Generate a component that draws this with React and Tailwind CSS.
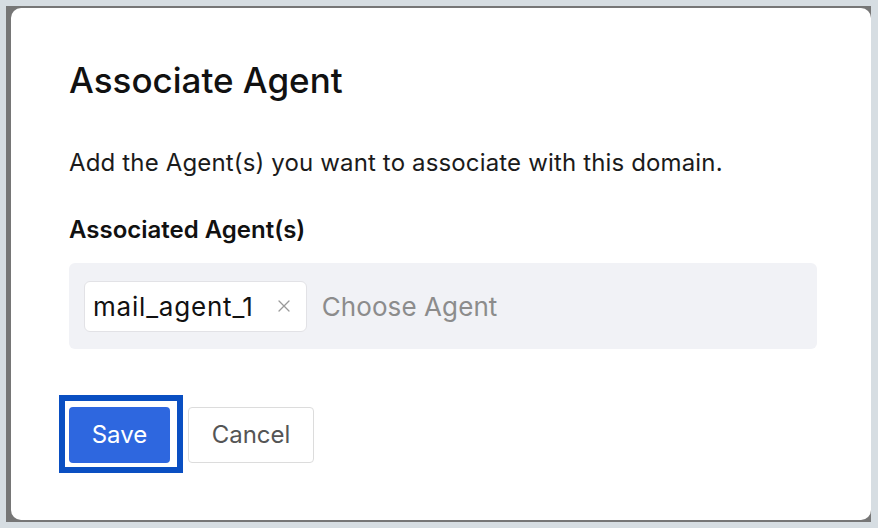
import React from "react";

const App = () => {
  return (
    <div className="w-[878px] h-[528px] bg-[#d6dde2] pt-[6px] pl-[6px] pr-[7px] pb-[6px] font-['Inter',sans-serif]">
      <div className="h-full bg-[#767676] pl-[5px] py-[2px]">
        <div className="h-full bg-white rounded-[10px] pl-[58px] pr-[54px] pt-[52px]">
          <h2 className="text-[35px] leading-[40px] font-medium text-[#111]">
            Associate Agent
          </h2>

          <p className="mt-[48px] text-[24px] leading-[30px] tracking-[0.15px] text-[#1b1b1b]">
            Add the Agent(s) you want to associate with this domain.
          </p>

          <label className="block mt-[37px] text-[24px] leading-[30px] font-semibold text-[#111]">
            Associated Agent(s)
          </label>

          <div className="mt-[18px] h-[86px] bg-[#f1f2f6] rounded-[6px] flex items-center pl-[15px] gap-[15px]">
            <div className="h-[51px] flex items-center gap-[24px] bg-white border border-[#e2e2e6] rounded-[6px] pl-[8px] pr-[16px]">
              <span className="text-[26px] tracking-[0.8px] text-[#111]">mail_agent_1</span>
              <svg width="12" height="12" viewBox="0 0 12 12" className="text-[#9a9a9a]">
                <path d="M1 1L11 11M11 1L1 11" stroke="currentColor" strokeWidth="1.3" strokeLinecap="round" />
              </svg>
            </div>
            <span className="text-[26px] tracking-[0.1px] text-[#8c8c8c]">Choose Agent</span>
          </div>

          <div className="mt-[58px] flex items-center gap-[18px]">
            <div className="-ml-[10px] -mr-[13px] -mt-[12px] -mb-[10px] border-[6px] border-[#0a4fc2] pl-[4px] pr-[7px] pt-[6px] pb-[4px]">
              <button className="block w-[101px] h-[56px] rounded-[4px] bg-[#2e67df] text-white text-[24px]">
                Save
              </button>
            </div>
            <button className="w-[126px] h-[56px] rounded-[4px] bg-white border border-[#dcdcdc] text-[#555] text-[24px]">
              Cancel
            </button>
          </div>
        </div>
      </div>
    </div>
  );
};

export default App;
